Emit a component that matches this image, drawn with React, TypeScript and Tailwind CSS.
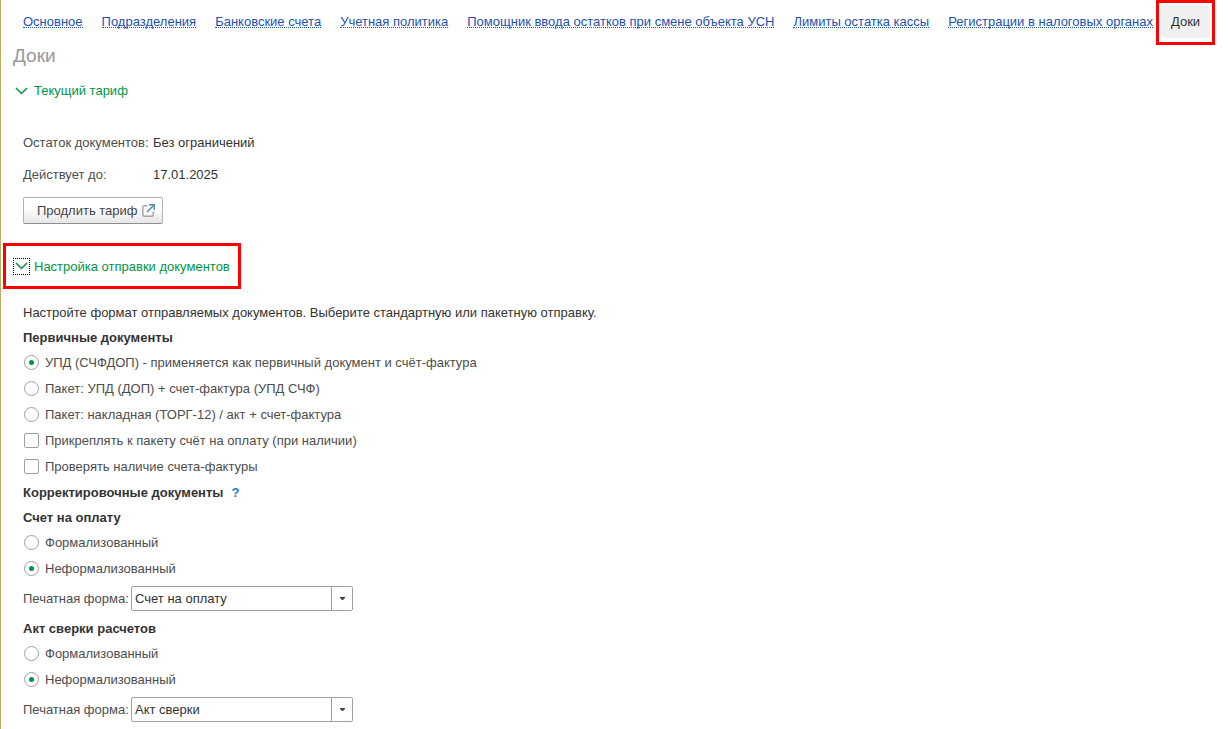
import { useState, type ReactNode } from "react";

const links = [
  "Основное",
  "Подразделения",
  "Банковские счета",
  "Учетная политика",
  "Помощник ввода остатков при смене объекта УСН",
  "Лимиты остатка кассы",
  "Регистрации в налоговых органах",
];

const primaryFormats = [
  "УПД (СЧФДОП) - применяется как первичный документ и счёт-фактура",
  "Пакет: УПД (ДОП) + счет-фактура (УПД СЧФ)",
  "Пакет: накладная (ТОРГ-12) / акт + счет-фактура",
];

const kinds = ["Формализованный", "Неформализованный"];

const Chevron = () => (
  <svg width="13" height="8" viewBox="0 0 13 8" fill="none" stroke="#009646" strokeWidth="1.5">
    <path d="M1 1 L6.5 6.5 L12 1" />
  </svg>
);

const OpenIcon = () => (
  <svg width="13" height="13" viewBox="0 0 13 13" fill="none">
    <path d="M5.5 1.7H2.3Q0.8 1.7 0.8 3.2V10.7Q0.8 12.2 2.3 12.2H9.8Q11.3 12.2 11.3 10.7V7.5" stroke="#a3a7b3" strokeWidth="1.5" />
    <path d="M5 8L11.8 1.2" stroke="#4b87b5" strokeWidth="1.4" />
    <path d="M7 0.8H12.2V6" stroke="#4b87b5" strokeWidth="1.4" />
  </svg>
);

const Heading = ({ children }: { children: ReactNode }) => (
  <h2 className="h-[25px] flex items-center gap-2 font-bold text-[#333]">{children}</h2>
);

interface RadioGroupProps {
  name: string;
  options: string[];
  initial: number;
}

const RadioGroup = ({ name, options, initial }: RadioGroupProps) => {
  const [selected, setSelected] = useState(initial);

  return (
    <div role="radiogroup">
      {options.map((option, i) => (
        <label key={option} className="h-[26px] flex items-center gap-1.5 pl-px">
          <input
            type="radio"
            name={name}
            checked={selected === i}
            onChange={() => setSelected(i)}
            className="appearance-none shrink-0 mb-px w-[15px] h-[15px] rounded-full border border-[#a0a0a0] bg-white flex items-center justify-center checked:before:content-[''] checked:before:w-[5px] checked:before:h-[5px] checked:before:rounded-full checked:before:bg-[#009646]"
          />
          {option}
        </label>
      ))}
    </div>
  );
};

const CheckRow = ({ label }: { label: string }) => (
  <label className="h-[26px] flex items-center gap-1.5 pl-px">
    <input
      type="checkbox"
      className="appearance-none shrink-0 mb-px w-[15px] h-[15px] rounded-[2px] border border-[#a0a0a0] bg-white checked:bg-[#009646]"
    />
    {label}
  </label>
);

const PrintForm = ({ id, options }: { id: string; options: string[] }) => (
  <div className="h-[34px] pt-1 flex items-start">
    <label htmlFor={id} className="w-[108px] leading-[25px]">
      Печатная форма:
    </label>
    <div className="relative w-[222px]">
      <select
        id={id}
        className="appearance-none block w-full h-[25px] pl-[3px] pr-6 border border-[#a0a0a0] rounded-[2px] bg-white text-[#333]"
      >
        {options.map((option) => (
          <option key={option}>{option}</option>
        ))}
      </select>
      <span className="absolute right-0 inset-y-0 w-[22px] border-l border-[#a0a0a0] flex items-center justify-center pointer-events-none">
        <svg width="5" height="3" viewBox="0 0 5 3" fill="#444">
          <path d="M0 0H5V1L3 3H2L0 1Z" />
        </svg>
      </span>
    </div>
  </div>
);

export default function App() {
  return (
    <div className="min-h-screen bg-white border-l border-[#bfae62] font-['Liberation_Sans',Arial,sans-serif] text-[13px] leading-4 text-[#4d4d4d]">
      <nav className="h-[45px] flex items-start pl-[22px] whitespace-nowrap">
        <div className="flex gap-[19px] pt-[14px]">
          {links.map((link) => (
            <a key={link} href="#" className="h-[14px] text-[#1e50b0] border-b border-dotted border-[#1e50b0]">
              {link}
            </a>
          ))}
        </div>
        <div className="ml-[3px] h-[45px] p-0.5 border-[3px] border-[#ff0000]">
          <a href="#" aria-current="page" className="block h-[33px] px-2.5 pt-[9px] rounded-[4px] bg-[#f0f0f0] text-[#333]">
            Доки
          </a>
        </div>
      </nav>

      <h1 className="pl-3 text-[19px] leading-[22px] text-[#999]">Доки</h1>

      <button className="mt-3 ml-3 h-6 pl-[2px] flex items-center gap-[6px] text-[#009646]">
        <Chevron />
        Текущий тариф
      </button>

      <section className="mt-6 pl-[22px]">
        <dl>
          <div className="h-8 flex items-center">
            <dt className="w-[130px]">Остаток документов:</dt>
            <dd className="text-[#333]">Без ограничений</dd>
          </div>
          <div className="h-8 flex items-center">
            <dt className="w-[130px]">Действует до:</dt>
            <dd className="text-[#333]">17.01.2025</dd>
          </div>
        </dl>
        <button className="mt-1.5 h-[27px] w-[140px] pl-[13px] pr-[7px] flex items-center justify-between border border-[#b0b0b0] border-b-[#8f8f8f] rounded-[2px] bg-linear-to-b from-white from-40% to-[#e6e6e6] text-[#444]">
          Продлить тариф
          <OpenIcon />
        </button>
      </section>

      <div className="mt-[19px] ml-[2px] w-[238px] h-[46px] pl-[7px] flex items-center border-[3px] border-[#ff0000]">
        <button className="flex items-center gap-1 text-[#009646] whitespace-nowrap">
          <span className="w-[17px] h-[17px] flex items-center justify-center border border-dotted border-black">
            <Chevron />
          </span>
          <span className="pt-px">Настройка отправки документов</span>
        </button>
      </div>

      <section className="mt-[11px] pl-[22px]">
        <p className="h-[25px] flex items-center text-[#333]">
          Настройте формат отправляемых документов. Выберите стандартную или пакетную отправку.
        </p>

        <Heading>Первичные документы</Heading>
        <RadioGroup name="primary" options={primaryFormats} initial={0} />
        <CheckRow label="Прикреплять к пакету счёт на оплату (при наличии)" />
        <CheckRow label="Проверять наличие счета-фактуры" />

        <Heading>
          Корректировочные документы
          <button className="font-bold text-[#1a7fc0]">?</button>
        </Heading>

        <Heading>Счет на оплату</Heading>
        <RadioGroup name="invoice" options={kinds} initial={1} />
        <PrintForm id="invoice-form" options={["Счет на оплату"]} />

        <Heading>Акт сверки расчетов</Heading>
        <RadioGroup name="reconciliation" options={kinds} initial={1} />
        <PrintForm id="reconciliation-form" options={["Акт сверки"]} />
      </section>
    </div>
  );
}
